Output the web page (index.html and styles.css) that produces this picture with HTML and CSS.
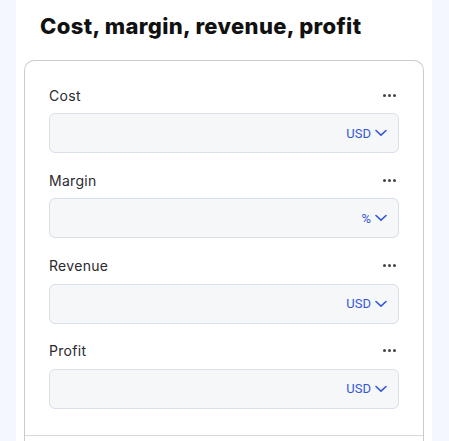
FILE: index.html
```html
<!DOCTYPE html>
<html lang="en">
<head>
<meta charset="utf-8">
<link rel="stylesheet" href="styles.css">
</head>
<body>
<div class="panel">
  <h1 class="title">Cost, margin, revenue, profit</h1>
  <div class="card">
    <div class="fields">
      <div class="field">
        <div class="field-head"><span class="label">Cost</span><span class="more"><i></i><i></i><i></i></span></div>
        <div class="input"><span class="unit">USD<svg class="chev" viewBox="0 0 12 8" width="12" height="8"><path d="M1 1.5 L6 6.2 L11 1.5" fill="none" stroke="currentColor" stroke-width="1.6" stroke-linecap="round" stroke-linejoin="round"/></svg></span></div>
      </div>
      <div class="field">
        <div class="field-head"><span class="label">Margin</span><span class="more"><i></i><i></i><i></i></span></div>
        <div class="input"><span class="unit">%<svg class="chev" viewBox="0 0 12 8" width="12" height="8"><path d="M1 1.5 L6 6.2 L11 1.5" fill="none" stroke="currentColor" stroke-width="1.6" stroke-linecap="round" stroke-linejoin="round"/></svg></span></div>
      </div>
      <div class="field">
        <div class="field-head"><span class="label">Revenue</span><span class="more"><i></i><i></i><i></i></span></div>
        <div class="input"><span class="unit">USD<svg class="chev" viewBox="0 0 12 8" width="12" height="8"><path d="M1 1.5 L6 6.2 L11 1.5" fill="none" stroke="currentColor" stroke-width="1.6" stroke-linecap="round" stroke-linejoin="round"/></svg></span></div>
      </div>
      <div class="field">
        <div class="field-head"><span class="label">Profit</span><span class="more"><i></i><i></i><i></i></span></div>
        <div class="input"><span class="unit">USD<svg class="chev" viewBox="0 0 12 8" width="12" height="8"><path d="M1 1.5 L6 6.2 L11 1.5" fill="none" stroke="currentColor" stroke-width="1.6" stroke-linecap="round" stroke-linejoin="round"/></svg></span></div>
      </div>
    </div>
    <div class="card-foot"></div>
  </div>
</div>
</body>
</html>
```
FILE: styles.css
```css
html, body {
  margin: 0;
  padding: 0;
  height: 100%;
}
body {
  background: #f4f7fd;
  font-family: Inter, "Liberation Sans", sans-serif;
  overflow: hidden;
}
.panel {
  margin-left: 16px;
  width: 416px;
  height: 100%;
  background: #ffffff;
  padding: 0 8px;
  box-sizing: border-box;
  display: flex;
  flex-direction: column;
}
.title {
  margin: 0;
  padding: 11px 0 0 16px;
  height: 60px;
  flex: none;
  box-sizing: border-box;
  font-family: Inter, "Liberation Sans", sans-serif;
  font-weight: 800;
  font-size: 22px;
  line-height: 30px;
  letter-spacing: 0.35px;
  color: #111111;
}
.card {
  flex: 1;
  border: 1px solid #c9cbd1;
  border-bottom: none;
  border-radius: 10px 10px 0 0;
}
.fields {
  display: flex;
  flex-direction: column;
  gap: 17.33px;
  padding: 24px 24px 26px;
}
.field {
  display: flex;
  flex-direction: column;
  gap: 8px;
}
.field-head {
  display: flex;
  justify-content: space-between;
  align-items: center;
  height: 20px;
}
.label {
  font-size: 14px;
  color: #2a2a2f;
  letter-spacing: 0.3px;
}
.more {
  display: flex;
  gap: 2px;
  margin-right: 3px;
}
.more i {
  width: 3px;
  height: 3px;
  border-radius: 50%;
  background: #44444a;
}
.input {
  height: 40px;
  box-sizing: border-box;
  border: 1px solid #d9dfeb;
  border-radius: 6px;
  background: #f6f7f9;
  display: flex;
  justify-content: flex-end;
  align-items: center;
  padding-right: 11px;
}
.unit {
  display: flex;
  align-items: center;
  gap: 4px;
  font-family: Roboto, "Liberation Sans", sans-serif;
  font-size: 13px;
  color: #3557d6;
}
.chev {
  display: block;
}
.card-foot {
  border-top: 1px solid #d6d8dd;
}
```
